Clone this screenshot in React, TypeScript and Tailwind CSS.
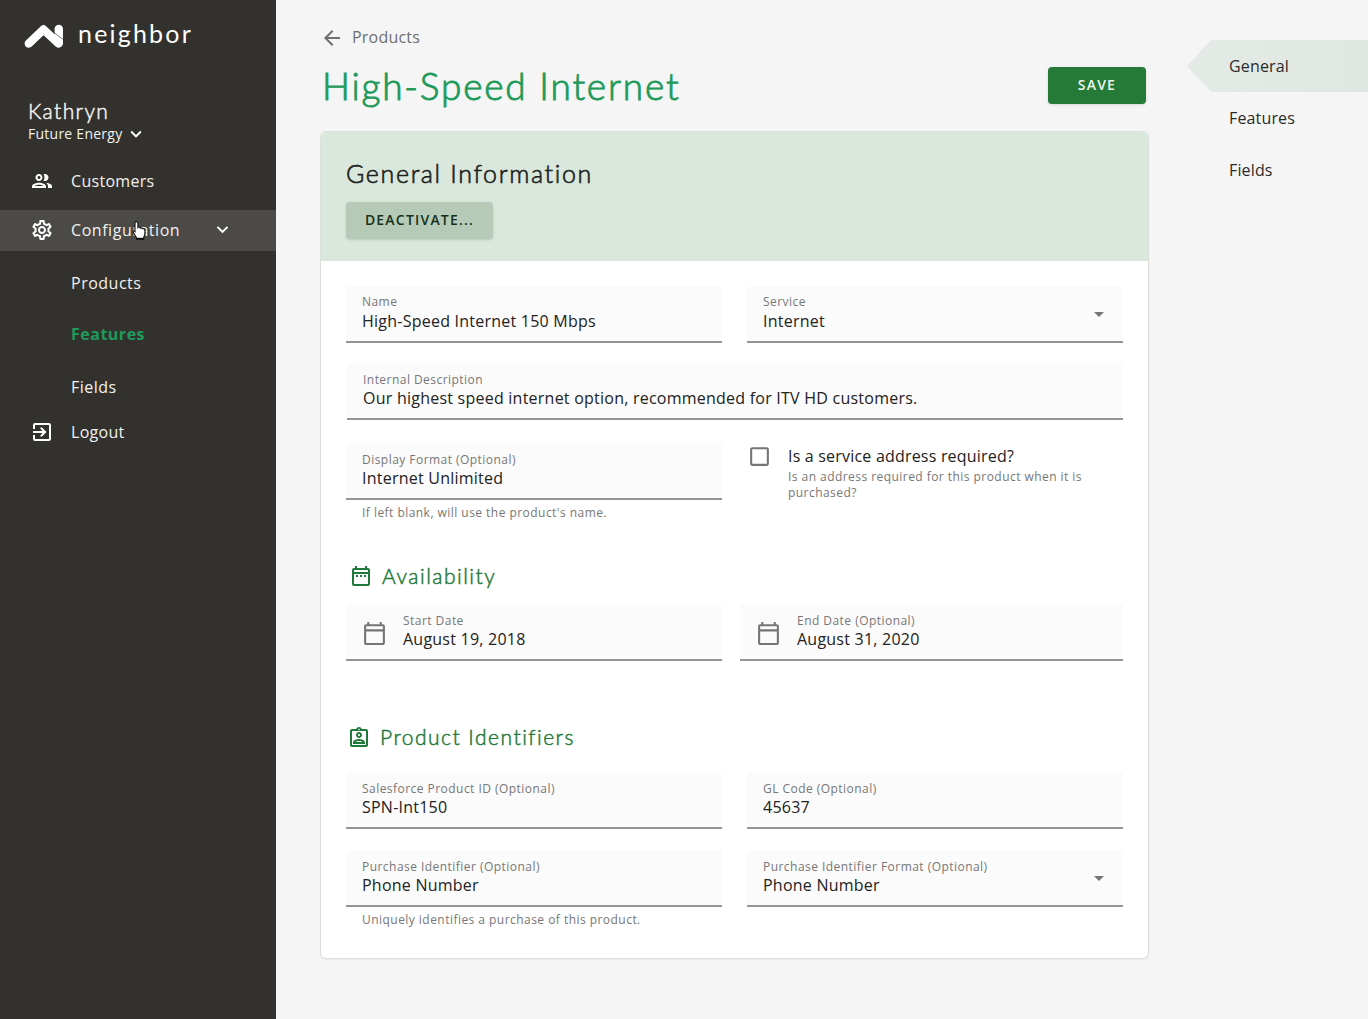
import type { ReactNode } from "react";
import {
  MdArrowBack,
  MdArrowDropDown,
  MdCheckBoxOutlineBlank,
  MdExitToApp,
  MdExpandMore,
  MdOutlineAssignmentInd,
  MdOutlineCalendarToday,
  MdOutlineDateRange,
  MdOutlineGroup,
  MdOutlineSettings,
} from "react-icons/md";

function Logo() {
  return (
    <svg className="mt-[3px]" width="40" height="26" viewBox="0 0 40 26" fill="none" stroke="#fff" strokeLinecap="round" strokeLinejoin="round">
      <path d="M4.800 19.500 L19.500 5.500 L34.500 19.500" strokeWidth="8.400" />
      <path d="M34.800 5 V19" strokeWidth="8.400" />
      <path d="M27.500 6.500 L39 15.500" stroke="#33312e" strokeWidth="0.6" />
      <path d="M28.300 0 V5.800" stroke="#33312e" strokeWidth="3" strokeLinecap="butt" />
    </svg>
  );
}

function HandCursor() {
  return (
    <svg className="absolute left-[132px] top-[10px]" width="15" height="21" viewBox="0 0 15 21">
      <path
        d="M4.200 1.600c1 0 1.700.7 1.700 1.700v4.200c.4-.5 2.100-.3 2.400.6.6-.5 2-.2 2.300.7.8-.4 2.300 0 2.300 1.600v3.100c0 1.700-1.100 2.600-1.100 4.100v1.500H4.600v-1.300C3.500 16.300 2.700 14.500 1.500 12.700c-.8-1.200.6-2.400 1.500-1.300V3.300c0-1 .5-1.700 1.200-1.700z"
        fill="#fff"
        stroke="#111"
        strokeWidth="1.1"
      />
      <path d="M4.500 18.700H12" stroke="#111" strokeWidth="1.800" />
    </svg>
  );
}

function NavItem({ icon, label, active, children }: { icon: ReactNode; label: string; active?: boolean; children?: ReactNode }) {
  return (
    <div className={`relative flex h-[41px] items-center pb-[2px] pl-[30px] ${active ? "bg-[#4b4a47]" : ""}`}>
      <span className="flex w-[41px] text-white">{icon}</span>
      <span className={`text-[16px] leading-6 ${active ? "tracking-[0.55px]" : "tracking-[0.3px]"}`}>{label}</span>
      {children}
    </div>
  );
}

type FieldProps = { label: string; value: string; select?: boolean; date?: boolean; lowLabel?: boolean; className?: string };

function Field({ label, value, select, date, lowLabel, className = "" }: FieldProps) {
  return (
    <div className={`flex h-[57px] items-start rounded-t border-b-2 border-[#959595] bg-[#fbfbfb] pl-4 ${className}`}>
      {date && <MdOutlineCalendarToday size={25} className="mr-4 mt-[17px] text-[#757575]" />}
      <div className={`flex flex-1 flex-col ${lowLabel ? "pt-[9px]" : "pt-2"}`}>
        <span className="text-[12px] leading-4 tracking-[0.46px] text-[#777]">{label}</span>
        <span className={`text-[16px] tracking-[0.235px] text-[#222] ${lowLabel ? "leading-5" : "leading-[22px]"}`}>{value}</span>
      </div>
      {select && <MdArrowDropDown size={24} className="mr-3 mt-4 text-[#757575]" />}
    </div>
  );
}

function SectionTitle({ icon, children }: { icon: ReactNode; children: ReactNode }) {
  return (
    <div className="flex h-7 items-center gap-[9px] text-[#1f7a3a]">
      {icon}
      <h3 className="pb-px font-['Lato'] text-[21px] font-light leading-7 tracking-[1.5px] [-webkit-text-stroke:0.5px]">{children}</h3>
    </div>
  );
}

export default function App() {
  return (
    <div className="flex h-[1019px] w-[1368px] overflow-hidden bg-[#f5f5f5] font-['Open_Sans',sans-serif]">
      <aside className="flex w-[276px] shrink-0 flex-col bg-[#33312e] text-[#f1f1ef]">
        <div className="flex h-[70px] items-center gap-[14px] pl-6">
          <Logo />
          <span className="mb-1 font-['Lato'] text-[25px] leading-8 tracking-[2.200px] text-white">neighbor</span>
        </div>
        <div className="mt-7 pl-7">
          <div className="font-['Lato'] text-[21px] font-light leading-[26px] tracking-[1.4px] [-webkit-text-stroke:0.5px]">Kathryn</div>
          <div className="-mt-px flex items-center text-[14px] leading-5 tracking-[0.25px]">
            Future Energy
            <MdExpandMore size={22} className="ml-[3px] text-white" />
          </div>
        </div>
        <nav className="mt-4 flex flex-col">
          <NavItem icon={<MdOutlineGroup size={24} />} label="Customers" />
          <div className="h-2" />
          <NavItem icon={<MdOutlineSettings size={24} />} label="Configuration" active>
            <MdExpandMore size={23} className="ml-[31px] text-white" />
            <HandCursor />
          </NavItem>
          <div className="flex flex-col pl-[71px] pt-5 text-[16px] leading-6 tracking-[0.5px]">
            <span>Products</span>
            <span className="mt-[27px] font-bold text-[#1f9a5b]">Features</span>
            <span className="mt-[29px]">Fields</span>
          </div>
          <div className="mt-[13px]">
            <NavItem icon={<MdExitToApp size={24} />} label="Logout" />
          </div>
        </nav>
      </aside>

      <main className="ml-[44px] w-[829px] shrink-0">
        <div className="mt-[25px] flex h-[25px] items-center gap-2 text-[16px] tracking-[0.2px] text-[#6f6f6f]">
          <MdArrowBack size={24} />
          <span className="pb-px">Products</span>
        </div>
        <div className="mt-3 flex items-center justify-between pr-[3px]">
          <h1 className="pl-[2px] font-['Lato'] text-[37px] font-light leading-[48px] tracking-[1.800px] text-[#1f9a5b] [-webkit-text-stroke:0.9px]">High-Speed Internet</h1>
          <button className="mb-[2px] h-[37px] w-[98px] rounded bg-[#257a37] pb-[2px] text-[14px] font-semibold tracking-[1.200px] text-[#eef8ee] shadow">SAVE</button>
        </div>

        <section className="mt-[21px] h-[828px] overflow-hidden rounded-md border border-[#dcdfdc] bg-white shadow-xs">
          <header className="h-[129px] bg-[#d9e7dc] pl-[25px] pt-[23px]">
            <h2 className="font-['Lato'] text-[25px] font-light leading-9 tracking-[1.650px] text-[#1c221d] [-webkit-text-stroke:0.6px]">General Information</h2>
            <button className="mt-[11px] h-[37px] w-[147px] rounded bg-[#b5cbb8] pb-[2px] text-[14px] font-semibold tracking-[1.200px] text-[#15301a] shadow">DEACTIVATE...</button>
          </header>
          <div className="px-[25px] pt-[25px]">
            <div className="flex gap-[25px]">
              <Field label="Name" value="High-Speed Internet 150 Mbps" className="w-[376px]" />
              <Field label="Service" value="Internet" select className="w-[376px]" />
            </div>
            <Field label="Internal Description" value="Our highest speed internet option, recommended for ITV HD customers." lowLabel className="ml-px mt-[20px]" />
            <div className="mt-[23px] flex gap-[25px]">
              <div className="w-[376px]">
                <Field label="Display Format (Optional)" value="Internet Unlimited" lowLabel />
                <p className="pl-4 pt-[5px] text-[12px] leading-4 tracking-[0.46px] text-[#777]">If left blank, will use the product's name.</p>
              </div>
              <div className="flex w-[376px] items-start">
                <MdCheckBoxOutlineBlank size={25} className="mt-px text-[#757575]" />
                <div className="ml-4 flex-1 pt-[2px]">
                  <div className="text-[16px] leading-[22px] tracking-[0.2px] text-[#222]">Is a service address required?</div>
                  <p className="mt-[2px] w-[310px] text-[12px] leading-4 tracking-[0.45px] text-[#777]">Is an address required for this product when it is purchased?</p>
                </div>
              </div>
            </div>
            <div className="mt-[41px] pl-[3px]">
              <SectionTitle icon={<MdOutlineDateRange size={24} />}>Availability</SectionTitle>
            </div>
            <div className="mt-[14px] flex gap-[18px]">
              <Field label="Start Date" value="August 19, 2018" date lowLabel className="w-[376px]" />
              <Field label="End Date (Optional)" value="August 31, 2020" date lowLabel className="w-[383px]" />
            </div>
            <div className="mt-[62px] pl-px">
              <SectionTitle icon={<MdOutlineAssignmentInd size={24} className="mt-px" />}>Product Identifiers</SectionTitle>
            </div>
            <div className="mt-[21px] flex gap-[25px]">
              <Field label="Salesforce Product ID (Optional)" value="SPN-Int150" lowLabel className="w-[376px]" />
              <Field label="GL Code (Optional)" value="45637" lowLabel className="w-[376px]" />
            </div>
            <div className="mt-[21px] flex gap-[25px]">
              <div className="w-[376px]">
                <Field label="Purchase Identifier (Optional)" value="Phone Number" lowLabel />
                <p className="pl-4 pt-[5px] text-[12px] leading-4 tracking-[0.46px] text-[#777]">Uniquely identifies a purchase of this product.</p>
              </div>
              <Field label="Purchase Identifier Format (Optional)" value="Phone Number" select lowLabel className="w-[376px]" />
            </div>
          </div>
        </section>
      </main>

      <nav className="ml-[38px] flex flex-1 flex-col pt-10 text-[16px] tracking-[0.15px] text-[#2b2b2b]">
        <span className="flex h-[52px] items-center bg-linear-to-r from-[#e4eae5] to-[#e0e6e1] pl-[42px] [clip-path:polygon(0_50%,24px_0,100%_0,100%_100%,24px_100%)]">General</span>
        <span className="flex h-[52px] items-center pl-[42px]">Features</span>
        <span className="flex h-[52px] items-center pl-[42px]">Fields</span>
      </nav>
    </div>
  );
}
